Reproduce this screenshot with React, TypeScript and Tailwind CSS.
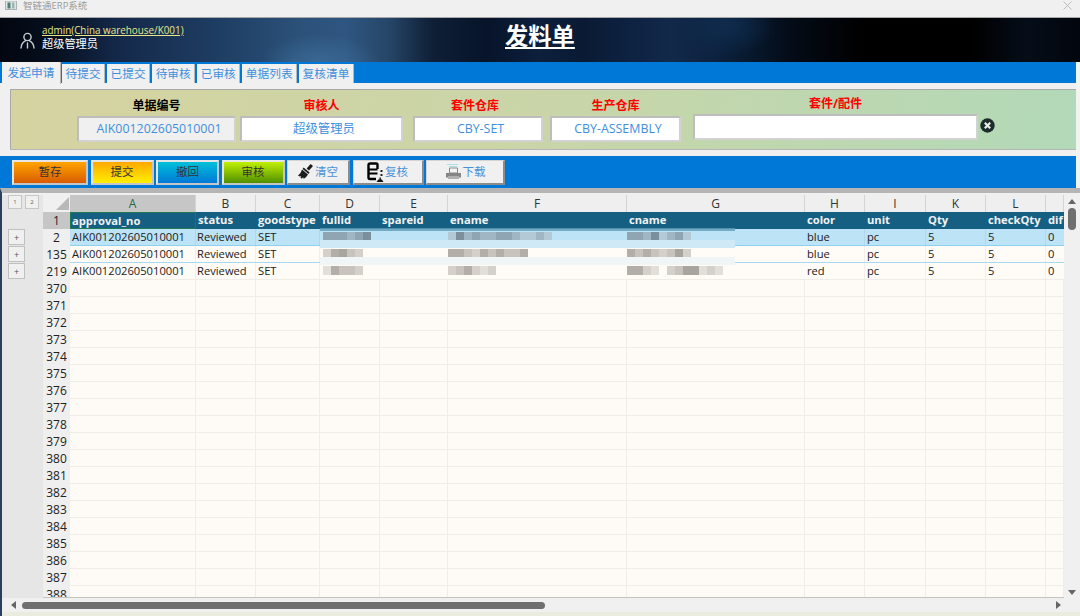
import React from "react";

const cjk = "font-['Open_Sans','Noto_Sans_CJK_SC',sans-serif]";

const tabs = ["待提交", "已提交", "待审核", "已审核", "单据列表", "复核清单"];

const columns = [
  { letter: "A", title: "approval_no", width: "w-[126px]" },
  { letter: "B", title: "status", width: "w-[60px]" },
  { letter: "C", title: "goodstype", width: "w-[64px]" },
  { letter: "D", title: "fullid", width: "w-[60px]" },
  { letter: "E", title: "spareid", width: "w-[68px]" },
  { letter: "F", title: "ename", width: "w-[179px]" },
  { letter: "G", title: "cname", width: "w-[178px]" },
  { letter: "H", title: "color", width: "w-[60px]" },
  { letter: "I", title: "unit", width: "w-[61px]" },
  { letter: "K", title: "Qty", width: "w-[60px]" },
  { letter: "L", title: "checkQty", width: "w-[60px]" },
  { letter: "", title: "dif", width: "w-[18px]" },
];

const shades: Record<string, string> = {
  a: "bg-[#8fa5b3]",
  b: "bg-[#a0b6c4]",
  c: "bg-[#7b909c]",
  d: "bg-[#b3c9d6]",
  e: "bg-[#d5d0c9]",
  f: "bg-[#b4aea8]",
  g: "bg-[#c8c3bd]",
  h: "bg-[#a8a49e]",
  i: "bg-[#e2dfda]",
  n: "bg-transparent",
};

const rows = [
  { no: 2, color: "blue", line: "border-[#8fd0ee]", bg: "bg-[#bde3f6]", fullid: "aaabac", ename: "dcbabbaabddbd", cname: "aabcdbad" },
  { no: 135, color: "blue", line: "border-[#a5daf0]", bg: "bg-[#fffbf7]", fullid: "efhge", ename: "ffgefgfggf", cname: "fgfgeghe" },
  { no: 219, color: "red", line: "border-[#f0ece6]", bg: "bg-[#fffbf7]", fullid: "ifgge", ename: "egfeie", cname: "ffeineghhiei" },
];

const emptyRows = Array.from({ length: 19 }, (_, i) => 370 + i);

function Pixels({ code }: { code: string }) {
  return (
    <div className="flex h-[9px]">
      {code.split("").map((c, i) => (
        <span key={i} className={`w-2 h-full ${shades[c]}`} />
      ))}
    </div>
  );
}

function UserIcon() {
  return (
    <svg width="15" height="17" viewBox="0 0 15 17" fill="none" stroke="#c9ced3" strokeWidth="1.4">
      <circle cx="7.5" cy="5" r="3.6" />
      <path d="M1 16c.2-3.6 2-6 4.6-7.4M14 16c-.2-3.6-2-6-4.6-7.4M7.5 11v5" strokeLinecap="round" />
    </svg>
  );
}

function BroomIcon() {
  return (
    <svg width="16" height="15" viewBox="0 0 16 15" fill="#1c1c1c">
      <path d="M12.6 0L15 2l-4 4.6-2.4-2z" />
      <path d="M5.6 3.6l6 5-1 1.4-6-5z" />
      <path d="M4 5.6l6 5c-1 1.8-2.6 3.4-4.2 4.2l-.8-1.6-1 1.6-1.6-1.2.8-1.6-1.6.6L0 11.4c2-1 3.2-3.4 4-5.8z" />
    </svg>
  );
}

function ReviewIcon() {
  return (
    <svg width="17" height="20" viewBox="0 0 17 20">
      <path d="M10.5 7V2.8A1.3 1.3 0 0 0 9.2 1.5H3A1.5 1.5 0 0 0 1.5 3v12.5A1.5 1.5 0 0 0 3 17h6" fill="none" stroke="#000" strokeWidth="2.4" />
      <path d="M2 7.4h8.5M2 11.6h8.5" stroke="#000" strokeWidth="2" />
      <path d="M13.5 8h2v2h-2zM13.5 12h2v2h-2z" fill="#222" />
      <path d="M9.5 20l1.8-2.4h1.2v-2h1.4v2h1l1.6 2.4z" fill="#111" />
    </svg>
  );
}

function PrinterIcon() {
  return (
    <svg width="17" height="17" viewBox="0 0 17 17">
      <path d="M2 1h11v1H2zM4 3h8v1H4z" fill="#a8e2e6" />
      <path d="M4.5 5h8v5h-8z" fill="#f4f4f4" stroke="#8a8a8a" />
      <path d="M1 10h15v4.5H1z" fill="#858585" />
      <path d="M3 13h11v3H3z" fill="#b0b0b0" />
    </svg>
  );
}

function ColorButton({ label, tone, width }: { label: string; tone: string; width: string }) {
  return (
    <button className={`${width} h-[25px] border-2 border-[#e6e6e6] border-b-[#c6c6c6] border-r-[#c6c6c6] text-[11.5px] text-[#333] ${tone}`}>
      {label}
    </button>
  );
}

function IconButton({ label, icon, width }: { label: string; icon: React.ReactNode; width: string }) {
  return (
    <button className={`${width} h-[25px] flex items-center justify-center gap-px bg-[#f0f0f0] border border-[#d4d4d4] border-b-2 border-r-2 border-b-[#8c8c8c] border-r-[#8c8c8c] text-[11.5px] text-[#4a90d9]`}>
      {icon}
      <span>{label}</span>
    </button>
  );
}

function Field({ label, value, labelColor, box, wrap }: { label: string; value: string; labelColor: string; box: string; wrap: string }) {
  return (
    <div className={`flex flex-col items-center ${wrap}`}>
      <div className={`text-[12px] font-bold leading-[16px] mb-[2px] ${labelColor}`}>{label}</div>
      <div className={`h-[26px] w-full flex items-center justify-center pl-[5px] border-2 border-[#bdbdbd] border-b-[#d2d2d2] border-r-[#d2d2d2] text-[12.4px] text-[#3f8fdc] ${box}`}>
        {value}
      </div>
    </div>
  );
}

export default function App() {
  return (
    <div className={`w-[1080px] h-[616px] overflow-hidden flex flex-col bg-[#f2f4ef] ${cjk}`}>
      {/* title bar */}
      <div className="h-[18px] shrink-0 flex items-center bg-[#f0f0f0] border-b border-[#a8a8a8] pl-[5px] pr-[8px] pb-[6px]">
        <svg width="12" height="9" viewBox="0 0 12 9" className="mr-[6px]">
          <rect x="0.5" y="0" width="11" height="8.5" fill="#dfe6e6" stroke="#aab4b4" />
          <rect x="2.5" y="1.5" width="3" height="6" fill="#4f7f78" />
          <rect x="7" y="1.5" width="2.5" height="6" fill="#9fb3b3" />
        </svg>
        <span className="text-[9.5px] leading-none text-[#9a9a9a]">智链通ERP系统</span>
        <svg width="9" height="9" viewBox="0 0 9 9" className="ml-auto" stroke="#bbb" strokeWidth="1">
          <path d="M.5.5l8 8M8.5.5l-8 8" />
        </svg>
      </div>

      {/* banner */}
      <div className="h-[44px] shrink-0 relative flex items-center bg-[radial-gradient(ellipse_60px_30px_at_320px_46px,#3a6a96,transparent),radial-gradient(ellipse_50px_30px_at_725px_8px,#0f2c4e,transparent),linear-gradient(90deg,#02060f_0%,#06101f_5%,#14294a_11%,#1e3d62_20%,#2c527a_28%,#2f5680_32%,#264668_36%,#0f1f36_40%,#07142a_45%,#0c1f3c_50%,#0a1a33_54%,#0d2140_58%,#12294a_62%,#0d2240_66%,#081a30_69%,#040c18_73%,#000_80%,#000_90%,#050d18_95%,#02060d_100%)]">
        <div className="ml-[20px] mr-[7px]">
          <UserIcon />
        </div>
        <div className="-mt-[6px]">
          <div className="text-[9.9px] leading-[14px] text-[#e8e88a] underline">admin(China warehouse/K001)</div>
          <div className="text-[11.2px] leading-[14px] text-white">超级管理员</div>
        </div>
        <div className="absolute left-[505px] top-[3px] text-[23.3px] leading-[30px] font-bold text-white underline decoration-2 underline-offset-[2px]">
          发料单
        </div>
      </div>

      {/* tab strip */}
      <div className="h-[21px] shrink-0 flex items-end bg-[#0078d7] pl-[2px] mr-[4px]">
        <div className="h-[22px] w-[59px] -mb-px relative flex items-center justify-center bg-[#f0f0f0] text-[11.7px] text-[#3f8fdc] border-r border-[#b8b8b8]">
          发起申请
        </div>
        {tabs.map((t, i) => (
          <div
            key={t}
            className={`h-[19px] px-[3.5px] ${i === 0 ? "ml-[1px]" : "ml-[2px]"} flex items-center bg-[#f0f0f0] text-[11.7px] text-[#3f8fdc] border-r border-[#b8b8b8]`}
          >
            {t}
          </div>
        ))}
      </div>

      {/* filter panel */}
      <div className="h-[72px] shrink-0 bg-[#f0f0f0] mr-[4px] pt-[6px] pb-[5px] pl-[10px]">
        <div className="h-[61px] flex items-start border border-[#a9a9a9] border-r-0 border-b-[#b5b5b5] bg-[linear-gradient(100deg,#d6d3a0,#c9d5a8_50%,#b2d9b8)] pt-[8px]">
          <Field label="单据编号" value="AIK001202605010001" labelColor="text-black" box="bg-[#f0f0f0]" wrap="w-[159px] ml-[66px]" />
          <Field label="审核人" value="超级管理员" labelColor="text-[#ff0000]" box="bg-white" wrap="w-[163px] ml-[4px]" />
          <Field label="套件仓库" value="CBY-SET" labelColor="text-[#ff0000] -translate-x-[3px]" box="bg-white" wrap="w-[130px] ml-[10px]" />
          <Field label="生产仓库" value="CBY-ASSEMBLY" labelColor="text-[#ff0000]" box="bg-white" wrap="w-[131px] ml-[7px]" />
          <div className="flex flex-col items-center w-[285px] ml-[12px] -mt-[2px]">
            <div className="text-[12px] font-bold leading-[16px] mb-[2px] text-[#ff0000]">套件/配件</div>
            <div className="h-[26px] w-full bg-white border-2 border-[#bdbdbd] border-b-[#d2d2d2] border-r-[#d2d2d2]" />
          </div>
          <svg width="15" height="15" viewBox="0 0 15 15" className="ml-[2px] mt-[20px]">
            <circle cx="7.5" cy="7.5" r="7.2" fill="#1f2c2c" />
            <path d="M4.8 4.8l5.4 5.4M10.2 4.8l-5.4 5.4" stroke="#e8efe8" strokeWidth="2.2" />
          </svg>
        </div>
      </div>

      {/* toolbar */}
      <div className="h-[33px] shrink-0 flex items-center gap-[2.5px] bg-[#0078d7] border-t border-[#f0f0f0] mr-[4px] pl-[12px]">
        <ColorButton label="暂存" width="w-[76px]" tone="bg-[linear-gradient(#ffa400,#d85c00)]" />
        <ColorButton label="提交" width="w-[63px]" tone="bg-[linear-gradient(#ffa800,#fff000)]" />
        <ColorButton label="撤回" width="w-[63px]" tone="bg-[linear-gradient(#00c0d8,#0078d7)]" />
        <ColorButton label="审核" width="w-[63px]" tone="bg-[linear-gradient(#c0f000,#4f8f00)]" />
        <IconButton label="清空" width="w-[63px]" icon={<BroomIcon />} />
        <IconButton label="复核" width="w-[71px]" icon={<ReviewIcon />} />
        <IconButton label="下载" width="w-[79px]" icon={<PrinterIcon />} />
      </div>

      {/* sheet */}
      <div className="flex-1 min-h-0 flex flex-col bg-[#f0f0f0] border-t-[5px] border-t-[#b5b5b5] border-l-2 border-l-[#2a3f5f] pt-[2px]">
        <div className="flex-1 min-h-0 flex">
          {/* group gutter */}
          <div className="w-[41px] shrink-0 bg-[#e6e6e6] pl-[6px]">
            <div className="flex h-[14px] gap-[3px] mb-[20px]">
              {["1", "2"].map((n) => (
                <div key={n} className="w-[14px] bg-[#f0f0f0] border border-[#c6c6c6] text-[6px] text-[#666] flex items-center justify-center">
                  {n}
                </div>
              ))}
            </div>
            {[0, 1, 2].map((n) => (
              <div key={n} className="w-[17px] h-[16px] mb-px bg-[#f0f0f0] border border-[#c0c0c0] text-[9px] leading-none text-[#555] flex items-center justify-center">
                +
              </div>
            ))}
          </div>

          {/* grid */}
          <div className="flex-1 min-w-0 overflow-hidden relative bg-[#fefaf5] text-[11.2px] text-[#222] border-b border-[#c4c4bc]">
            {/* column letters */}
            <div className="flex h-[17px] bg-[#efefef]">
              <div className="w-[27px] shrink-0 bg-[#f0f0f0] flex justify-end items-end pr-px pb-[2px]">
                <div className="w-0 h-0 border-l-[13px] border-l-transparent border-b-[13px] border-b-[#b8b8b8]" />
              </div>
              {columns.map((c, i) => (
                <div
                  key={c.title}
                  className={`${c.width} shrink-0 flex items-center justify-center text-[12px] border-r border-[#d4d4d4] ${i === 0 ? "bg-[#c6c6c6] text-[#1f6b45]" : "text-[#333]"}`}
                >
                  {c.letter}
                </div>
              ))}
            </div>

            {/* header row */}
            <div className="flex h-[17px]">
              <div className="w-[27px] shrink-0 bg-[#c6c6c6] text-[12px] text-center leading-[17px]">1</div>
              {columns.map((c, i) => (
                <div
                  key={c.title}
                  className={`${c.width} shrink-0 bg-[#156082] font-bold text-[#f2f2f2] leading-[16px] overflow-hidden ${i === 0 ? "border border-[#1f7a53] pl-px" : "pl-[2px]"}`}
                >
                  {c.title}
                </div>
              ))}
            </div>

            {/* data rows */}
            {rows.map((r) => (
              <div key={r.no} className="flex h-[17px]">
                <div className="w-[27px] shrink-0 bg-[#efefef] text-[12px] text-center leading-[17px]">{r.no}</div>
                <div className={`flex border-b ${r.line} ${r.bg}`}>
                  <div className="w-[126px] shrink-0 pl-[2px] leading-[16px] border-r border-black/5">AIK001202605010001</div>
                  <div className="w-[60px] shrink-0 pl-px leading-[16px] border-r border-black/5">Reviewed</div>
                  <div className="w-[64px] shrink-0 pl-[2px] leading-[16px] border-r border-black/5">SET</div>
                  <div className="w-[60px] shrink-0 pt-[3px] pl-[3px]"><Pixels code={r.fullid} /></div>
                  <div className="w-[68px] shrink-0" />
                  <div className="w-[179px] shrink-0 pt-[3px]"><Pixels code={r.ename} /></div>
                  <div className="w-[178px] shrink-0 pt-[3px]"><Pixels code={r.cname} /></div>
                  <div className="w-[60px] shrink-0 pl-[2px] leading-[16px] border-r border-black/5">{r.color}</div>
                  <div className="w-[61px] shrink-0 pl-[2px] leading-[16px] border-r border-black/5">pc</div>
                  <div className="w-[60px] shrink-0 pl-[2px] leading-[16px] border-r border-black/5">5</div>
                  <div className="w-[60px] shrink-0 pl-[2px] leading-[16px] border-r border-black/5">5</div>
                  <div className="w-[18px] shrink-0 pl-[2px] leading-[16px]">0</div>
                </div>
              </div>
            ))}

            {/* empty rows */}
            {emptyRows.map((n) => (
              <div key={n} className="flex h-[17px]">
                <div className="w-[27px] shrink-0 bg-[#efefef] text-[12px] text-center leading-[17px]">{n}</div>
                {columns.map((c) => (
                  <div key={c.title} className={`${c.width} shrink-0 border-r border-b border-[#f0ece6]`} />
                ))}
              </div>
            ))}

            {/* smear left over the blurred columns */}
            <div className="absolute left-[277px] top-[33px] w-[415px] h-[3px] bg-[#5f9cb8]/80" />
            <div className="absolute left-[277px] top-[45px] w-[415px] h-[8px] bg-[#cfeaf6]" />
            <div className="absolute left-[277px] top-[62px] w-[415px] h-[8px] bg-[#eff6f5]" />
          </div>

          {/* vertical scrollbar */}
          <div className="w-[16px] shrink-0 bg-[#f0f0f0] flex flex-col items-center pt-[4px] pb-[3px]">
            <div className="w-0 h-0 border-x-[4px] border-x-transparent border-b-[5px] border-b-[#666]" />
            <div className="w-[8px] h-[22px] mt-[4px] rounded-full bg-[#6f6f6f]" />
            <div className="mt-auto w-0 h-0 border-x-[4px] border-x-transparent border-t-[5px] border-t-[#666]" />
          </div>
        </div>

        {/* horizontal scrollbar */}
        <div className="h-[14px] shrink-0 flex items-center bg-[#f0f0f0] pl-[9px] pr-[19px]">
          <div className="w-0 h-0 border-y-[4px] border-y-transparent border-r-[5px] border-r-[#666]" />
          <div className="w-[523px] h-[7px] ml-[6px] rounded-full bg-[#6f6f6f]" />
          <div className="ml-auto w-0 h-0 border-y-[4px] border-y-transparent border-l-[5px] border-l-[#666]" />
        </div>
        <div className="h-[4px] shrink-0 bg-[#e9ecdf]" />
      </div>
    </div>
  );
}
